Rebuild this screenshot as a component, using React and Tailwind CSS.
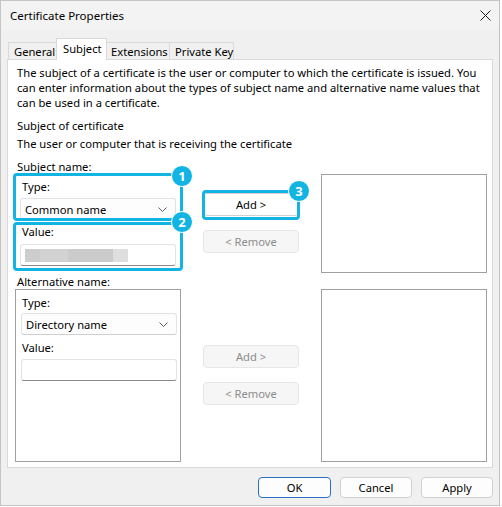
import React from "react";

const CYAN = "border-[#12b4e4]";

function Chevron() {
  return (
    <svg width="9" height="5" viewBox="0 0 9 5" className="shrink-0">
      <path d="M0.5 0.5 L4.5 4.5 L8.5 0.5" fill="none" stroke="#5f5f5f" strokeWidth="1" />
    </svg>
  );
}

function Combo({ value }) {
  return (
    <div className="ml-[5px] flex h-[22px] w-[156px] items-center justify-between rounded-[3px] border border-[#e3e3e3] border-b-[#cfcfcf] bg-[#fdfdfd] pl-[4px] pr-[8px]">
      <span>{value}</span>
      <Chevron />
    </div>
  );
}

function Input({ children }) {
  return (
    <div className="ml-[5px] flex h-[22px] w-[156px] items-center rounded-[3px] border border-[#e3e3e3] border-b-[#8a8a8a] bg-white pl-[4px]">
      {children}
    </div>
  );
}

function Btn({ children, disabled, className = "" }) {
  return (
    <div
      className={`flex h-[23px] w-[96px] items-center justify-center rounded-[4px] border ${
        disabled ? "border-[#e6e6e6] bg-[#f6f6f6] text-[#8c8c8c]" : "border-[#d0d0d0] bg-white text-black"
      } ${className}`}
    >
      {children}
    </div>
  );
}

function Badge({ n, className }) {
  return (
    <div
      className={`absolute flex h-[22px] w-[22px] items-center justify-center rounded-full border-[1.5px] border-white bg-[#12b4e4] text-[13px] font-bold leading-none text-white ${className}`}
    >
      {n}
    </div>
  );
}

export default function App() {
  return (
    <div className="h-[507px] w-[502px] bg-white font-['Noto_Sans',sans-serif] text-[11.2px] leading-[15px] text-black">
      <div className="flex h-[506px] w-[500px] flex-col border border-[#c4c4c4] bg-[#f0f0f0]">
        {/* title bar */}
        <div className="flex h-[29px] items-center justify-between bg-[#f3f3f3] pl-[9px] pr-[8px]">
          <span className="text-[11.5px]">Certificate Properties</span>
          <svg width="11" height="11" viewBox="0 0 11 11">
            <path d="M0.5 0.5 L10.5 10.5 M10.5 0.5 L0.5 10.5" stroke="#1a1a1a" strokeWidth="1" />
          </svg>
        </div>

        {/* tabs */}
        <div className="relative z-10 -mb-px flex h-[30px] items-end whitespace-nowrap pl-[7px]">
          <div className="flex h-[18px] w-[49px] items-center border border-b-0 border-[#d9d9d9] pl-[5px]">General</div>
          <div className="flex h-[22px] w-[51px] -ml-px items-center border border-b-0 border-[#d9d9d9] bg-white pl-[6px] pb-[2px]">
            Subject
          </div>
          <div className="flex h-[18px] w-[64px] -ml-px items-center border border-b-0 border-[#d9d9d9] pl-[4px]">Extensions</div>
          <div className="flex h-[18px] w-[65px] -ml-px items-center border border-b-0 border-[#d9d9d9] pl-[5px]">Private Key</div>
        </div>

        {/* panel */}
        <div className="ml-[6px] h-[409px] w-[486px] border border-[#d9d9d9] bg-white">
          <div className="pl-[9px] pt-[5px] whitespace-nowrap">
            <p>The subject of a certificate is the user or computer to which the certificate is issued. You</p>
            <p>can enter information about the types of subject name and alternative name values that</p>
            <p>can be used in a certificate.</p>
            <p className="mt-[8px]">Subject of certificate</p>
            <p className="mt-[3px]">The user or computer that is receiving the certificate</p>
          </div>

          {/* subject name row */}
          <div className="relative mt-[8px] flex items-start pl-[7px]">
            <div className="w-[166px]">
              <div className="pl-[2px]">Subject name:</div>
              <div className="mt-[5px] pl-[7px]">Type:</div>
              <div className="mt-[4px]">
                <Combo value="Common name" />
              </div>
              <div className="mt-[4px] pl-[7px]">Value:</div>
              <div className="mt-[5px]">
                <Input>
                  <div className="flex h-[13px]">
                    <div className="w-[15px] bg-[#cdcdcd]" />
                    <div className="w-[28px] bg-[#d2d2d2]" />
                    <div className="w-[45px] bg-[#cbcbcb]" />
                    <div className="w-[15px] bg-[#dedede]" />
                  </div>
                </Input>
              </div>
            </div>
            <div className="ml-[22px] flex flex-col">
              <Btn className="mt-[34px]">Add &gt;</Btn>
              <Btn disabled className="mt-[14px]">&lt; Remove</Btn>
            </div>
            <div className="ml-[22px] mt-[15px] h-[99px] w-[166px] border border-[#a0a0a0]" />

            {/* callouts */}
            <div className={`absolute left-[5px] top-[14px] h-[48px] w-[170px] rounded-[4px] border-[3px] ${CYAN}`} />
            <div className={`absolute left-[5px] top-[63px] h-[49px] w-[170px] rounded-[4px] border-[3px] ${CYAN}`} />
            <div className={`absolute left-[194px] top-[31px] h-[30px] w-[98px] rounded-[4px] border-[3px] ${CYAN}`} />
            <Badge n="1" className="left-[163px] top-[6px]" />
            <Badge n="2" className="left-[163px] top-[52px]" />
            <Badge n="3" className="left-[280px] top-[21px]" />
          </div>

          {/* alternative name row */}
          <div className="mt-px flex items-start pl-[7px]">
            <div className="w-[166px]">
              <div className="pl-[2px]">Alternative name:</div>
              <div className="h-[173px] border border-[#a0a0a0]">
                <div className="mt-[5px] pl-[6px]">Type:</div>
                <div className="mt-[3px]">
                  <Combo value="Directory name" />
                </div>
                <div className="mt-[5px] pl-[6px]">Value:</div>
                <div className="mt-[4px]">
                  <Input />
                </div>
              </div>
            </div>
            <div className="ml-[22px] flex flex-col">
              <Btn disabled className="mt-[71px]">Add &gt;</Btn>
              <Btn disabled className="mt-[14px]">&lt; Remove</Btn>
            </div>
            <div className="ml-[22px] mt-[15px] h-[173px] w-[166px] border border-[#a0a0a0]" />
          </div>
        </div>

        {/* footer buttons */}
        <div className="flex justify-end gap-[9px] pr-[6px] pt-[9px]">
          <div className="flex h-[21px] w-[73px] items-center justify-center rounded-[4px] border border-[#2a6fc0] bg-[#fdfdfd]">OK</div>
          <div className="flex h-[21px] w-[72px] items-center justify-center rounded-[4px] border border-[#d0d0d0] bg-[#fdfdfd]">Cancel</div>
          <div className="flex h-[21px] w-[72px] items-center justify-center rounded-[4px] border border-[#d0d0d0] bg-[#fdfdfd]">Apply</div>
        </div>
      </div>
    </div>
  );
}
